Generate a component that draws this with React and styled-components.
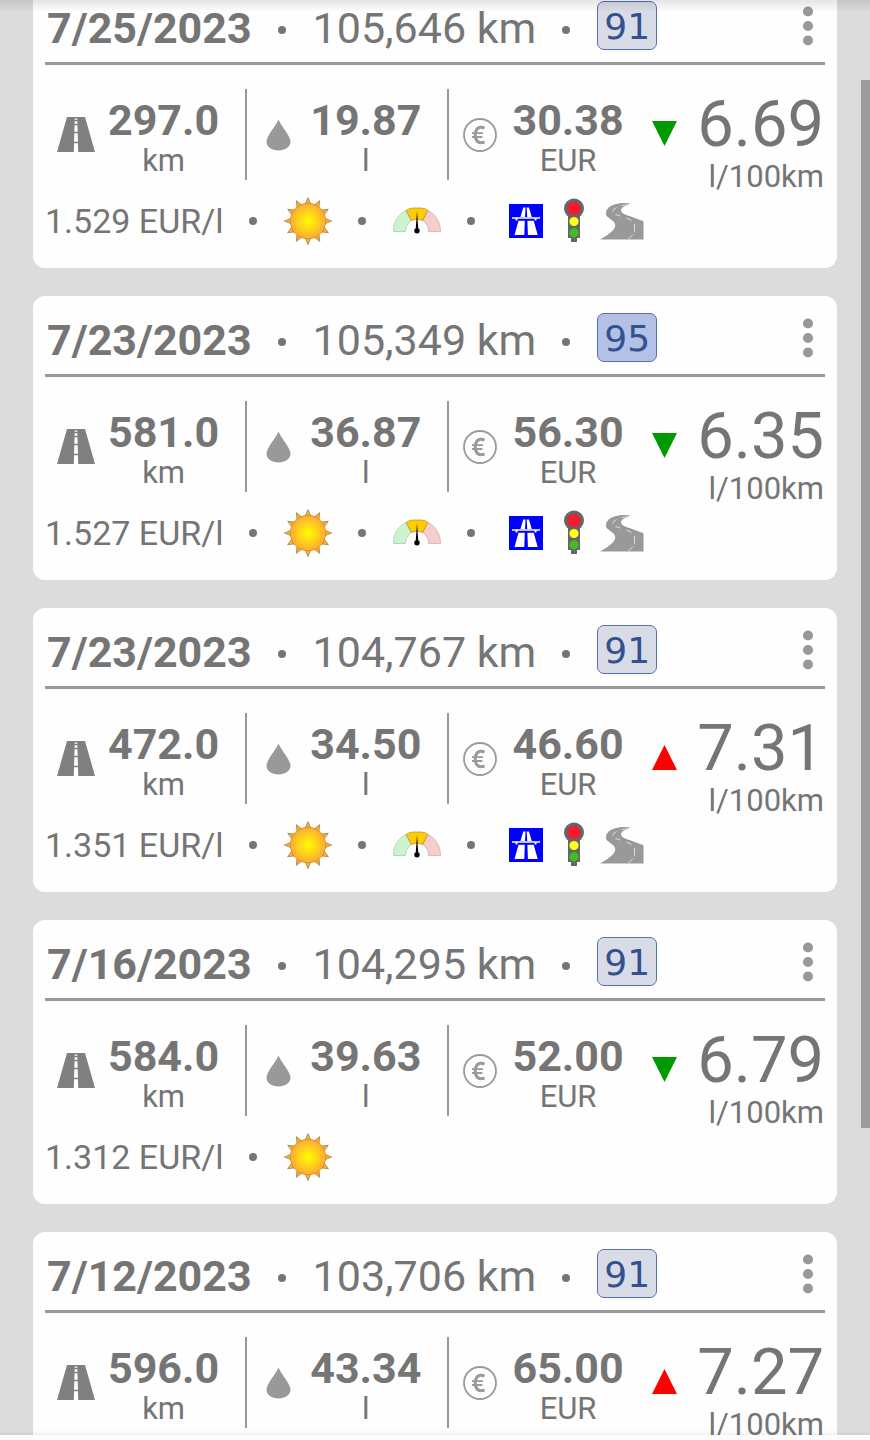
import styled, { createGlobalStyle } from 'styled-components'

const entries = [
  { id: 1, date: '7/25/2023', odometer: '105,646 km', octane: 91, distance: '297.0', volume: '19.87', cost: '30.38', trend: 'down', consumption: '6.69', price: '1.529 EUR/l', gauge: true, roads: true },
  { id: 2, date: '7/23/2023', odometer: '105,349 km', octane: 95, distance: '581.0', volume: '36.87', cost: '56.30', trend: 'down', consumption: '6.35', price: '1.527 EUR/l', gauge: true, roads: true },
  { id: 3, date: '7/23/2023', odometer: '104,767 km', octane: 91, distance: '472.0', volume: '34.50', cost: '46.60', trend: 'up', consumption: '7.31', price: '1.351 EUR/l', gauge: true, roads: true },
  { id: 4, date: '7/16/2023', odometer: '104,295 km', octane: 91, distance: '584.0', volume: '39.63', cost: '52.00', trend: 'down', consumption: '6.79', price: '1.312 EUR/l' },
  { id: 5, date: '7/12/2023', odometer: '103,706 km', octane: 91, distance: '596.0', volume: '43.34', cost: '65.00', trend: 'up', consumption: '7.27' },
]

const GlobalStyle = createGlobalStyle`
  *{
    box-sizing:border-box;
  }
  body{
    margin:0;
    background:#fdfdfd;
    color:#757575;
    font-family:Roboto, sans-serif;
  }
`

const Screen = styled.main`
  display:flex;
  flex-direction:column;
  height:100vh;
  padding-bottom:5px;
`

const Scroller = styled.div`
  position:relative;
  flex:1;
  min-height:0;
  overflow:hidden;
  background:#dcdcdc;
    &::before, &::after{
      content:'';
      position:absolute;
      left:0;
      right:0;
      z-index:1;
    }
    &::before{
      top:0;
      height:12px;
      background:linear-gradient(rgba(0, 0, 0, 0.1), rgba(0, 0, 0, 0));
    }
    &::after{
      bottom:0;
      height:5px;
      background:linear-gradient(rgba(0, 0, 0, 0), rgba(0, 0, 0, 0.05));
    }
`

const Thumb = styled.div`
  position:absolute;
  top:80px;
  right:0;
  width:9px;
  height:73%;
  background:#9d9d9d;
`

const List = styled.div`
  display:flex;
  flex-direction:column;
  gap:28px;
  margin-top:-16px;
  padding:0 33px;
`

const Card = styled.article`
  flex:none;
  min-height:284px;
  padding:0 12px 21px;
  border-radius:12px;
  background:#fefefe;
  white-space:nowrap;
`

const Header = styled.header`
  display:flex;
  align-items:flex-end;
  height:81px;
  padding:0 0 12px 2px;
  border-bottom:3px solid #999;
`

const Title = styled.h2`
  margin:0;
  font-size:43px;
  line-height:44px;
  font-weight:700;
`

const Odometer = styled.span`
  font-size:43px;
  line-height:44px;
`

const Dot = styled.span`
  display:flex;
  align-items:center;
  height:40px;
  padding:0 27px 0 26px;
    &::before{
      content:'';
      width:8px;
      height:8px;
      border-radius:50%;
      background:#757575;
    }
`

const Octane = styled.span`
  width:60px;
  height:49px;
  border:1px solid #5570ad;
  border-radius:7px;
  background:${({ $premium }) => ($premium ? '#b2c1e5' : '#d8dce7')};
  color:#34508f;
  font-family:'DejaVu Sans', sans-serif;
  font-size:36px;
  line-height:49px;
  text-align:center;
`

const MenuButton = styled.button`
  display:flex;
  align-items:center;
  justify-content:center;
  width:34px;
  height:49px;
  margin-left:auto;
  padding:0;
  border:none;
  background:none;
  cursor:pointer;
`

const Stats = styled.div`
  display:grid;
  grid-template-columns:7fr 7fr 7fr 6fr;
  align-items:start;
  padding-top:24px;
`

const Stat = styled.div`
  display:flex;
  align-items:center;
  height:91px;
  padding:0 24px 0 1px;
  border-right:2px solid ${({ $last }) => ($last ? 'transparent' : '#999')};
`

const StatIcon = styled.div`
  display:flex;
  flex:none;
  align-items:center;
  justify-content:center;
  width:60px;
`

const Figure = styled.div`
  flex:1;
  padding-top:6px;
  text-align:center;
`

const Value = styled.div`
  font-size:43px;
  line-height:46px;
  font-weight:700;
`

const Unit = styled.div`
  font-size:31px;
  line-height:36px;
`

const Consumption = styled.div`
  display:flex;
  justify-content:space-between;
  padding-right:1px;
  text-align:right;
`

const Trend = styled.div`
  display:flex;
  align-items:center;
  height:88px;
`

const Average = styled.div`
  font-size:65px;
  line-height:70px;
`

const Footer = styled.footer`
  display:flex;
  align-items:center;
  height:52px;
`

const Price = styled.span`
  font-size:34px;
  line-height:40px;
`

const Condition = styled.span`
  display:flex;
  align-items:center;
  justify-content:center;
  width:48px;
  height:48px;
`

const RoadIcon = () => (
  <svg width="38" height="35" viewBox="0 0 38 35">
    <path d="M10 0h18l10 35H0z" fill="#808080" />
    <path d="M17.700 1.500h2.600L21.200 35h-4.400z" fill="#fff" />
    <path d="M16 3.500h6M16 7.500h6M16 15.500h6M16 25.500h6" stroke="#808080" strokeWidth="1.400" />
  </svg>
)

const DropIcon = () => (
  <svg width="25" height="32" viewBox="0 0 25 32">
    <path d="M12.500 0.500C14.500 6 24.500 17 24.500 22.500c0 5.500-5.400 9-12 9S0.500 28 0.500 22.500C0.500 17 10.500 6 12.500 0.500z" fill="#999" />
  </svg>
)

const EuroIcon = () => (
  <svg width="34" height="34" viewBox="0 0 34 34" fill="none" stroke="#999">
    <circle cx="17" cy="17" r="16" strokeWidth="1.800" />
    <path d="M21.500 10.200c-5.200-2.600-9.300 0.600-9.300 6.800s4.100 9.400 9.300 6.800" strokeWidth="3" />
    <path d="M9 15.200h11M9 19h10.400" strokeWidth="1.800" />
  </svg>
)

const TrendIcon = ({ trend }) => (
  <svg width="25" height="25" viewBox="0 0 25 25">
    {trend === 'up' ? <path d="M12.500 0L25 25H0z" fill="#f00" /> : <path d="M0 0h25L12.500 25z" fill="#090" />}
  </svg>
)

const MenuIcon = () => (
  <svg width="10" height="40" viewBox="0 0 10 40" fill="#999">
    <circle cx="5" cy="5.500" r="5" />
    <circle cx="5" cy="20" r="5" />
    <circle cx="5" cy="34.500" r="5" />
  </svg>
)

const rays = Array.from({ length: 12 }, (_, i) => i * 30)

const SunIcon = () => (
  <svg width="48" height="48" viewBox="0 0 48 48">
    <defs>
      <radialGradient id="sun">
        <stop offset="0" stopColor="#ffff00" />
        <stop offset="1" stopColor="#ffa932" />
      </radialGradient>
    </defs>
    {rays.map(angle => (
      <path key={angle} d="M24 0.500L27 7.500H21z" fill="#ffb02e" stroke="#8a6a3c" strokeWidth="0.600" transform={`rotate(${angle} 24 24)`} />
    ))}
    <circle cx="24" cy="24" r="17.800" fill="url(#sun)" stroke="#b98237" strokeWidth="0.600" />
  </svg>
)

const GaugeIcon = () => (
  <svg width="48" height="48" viewBox="0 0 48 48" strokeWidth="0.700">
    <path d="M0.500 34.500C0.500 25 5 17.500 13 13.500L18.500 23.500C14.500 26 12.500 30 12.500 34.500z" fill="#ccf5cf" stroke="#a9bfa9" />
    <path d="M47.500 34.500C47.500 25 43 17.500 35 13.500L29.500 23.500C33.500 26 35.500 30 35.500 34.500z" fill="#f6cccc" stroke="#c9aaaa" />
    <path d="M13 13.500Q16 11 20 11H28Q32 11 35 13.500L29.500 23.500Q24 20.500 18.500 23.500z" fill="#ffcc00" stroke="#a98e2c" />
    <path d="M24 14L25.200 31H22.800z" />
    <circle cx="24" cy="33.800" r="2.700" />
  </svg>
)

const MotorwayIcon = () => (
  <svg width="34" height="34" viewBox="0 0 34 34">
    <path d="M0 0h34v34H0z" fill="#00f" />
    <g fill="#fff">
      <path d="M14.300 3.500h2.200L16 13h-4.600zM17.700 3.500h2.200L22.800 13h-4.600zM9.500 16.800h6.300L15.300 31H5.500zM18.400 16.800h6.300L28.700 31H18.900z" />
      <path d="M3 13.300h28v1.500h-3.500v1.700h-2v-1.700h-17v1.700h-2v-1.700H3z" />
    </g>
  </svg>
)

const TrafficLightIcon = () => (
  <svg width="20" height="46" viewBox="0 0 20 46">
    <path d="M4 15h12v25h-3v4H7v-4H4z" fill="#666" />
    <circle cx="10" cy="10.500" r="10" fill="#666" />
    <circle cx="10" cy="10.500" r="6.600" fill="#f51b2e" />
    <circle cx="10" cy="23.500" r="4.600" fill="#ffff14" />
    <circle cx="10" cy="34.800" r="4.600" fill="#3fbd23" />
  </svg>
)

const CountryRoadIcon = () => (
  <svg width="44" height="38" viewBox="0 0 44 38">
    <path d="M0 37.500C6 34 11 31 14 27C16 24 15.500 21.500 13 19C9 16 6 14.500 6 11.500C6 7 9.500 4 15 2.300C20 1 26 0.500 30 1.700C26 3.500 21.500 5 21 8C21 11.500 25 12.500 29.500 14L43.500 19.200V37.500z" fill="#999" />
    <path d="M26.500 2.500L21.500 3.800M16.500 5.500Q13.500 7 12.500 9.500M15.500 12.500L20.500 14M26.500 16L31.500 18.500M34.500 22V29.500M33 32.500L28.500 37" fill="none" stroke="#e4e4e4" strokeWidth="0.900" />
  </svg>
)

const Entry = ({ entry }) => {
  return <Card>
    <Header>
      <Title>{entry.date}</Title>
      <Dot />
      <Odometer>{entry.odometer}</Odometer>
      <Dot />
      <Octane $premium={entry.octane >= 95}>{entry.octane}</Octane>
      <MenuButton aria-label='Menu'><MenuIcon /></MenuButton>
    </Header>

    <Stats>
      <Stat>
        <StatIcon><RoadIcon /></StatIcon>
        <Figure><Value>{entry.distance}</Value><Unit>km</Unit></Figure>
      </Stat>
      <Stat>
        <StatIcon><DropIcon /></StatIcon>
        <Figure><Value>{entry.volume}</Value><Unit>l</Unit></Figure>
      </Stat>
      <Stat $last>
        <StatIcon><EuroIcon /></StatIcon>
        <Figure><Value>{entry.cost}</Value><Unit>EUR</Unit></Figure>
      </Stat>
      <Consumption>
        <Trend><TrendIcon trend={entry.trend} /></Trend>
        <div>
          <Average>{entry.consumption}</Average>
          <Unit>l/100km</Unit>
        </div>
      </Consumption>
    </Stats>

    {entry.price && <Footer>
      <Price>{entry.price}</Price>
      <Dot />
      <Condition><SunIcon /></Condition>
      {entry.gauge && <><Dot /><Condition><GaugeIcon /></Condition></>}
      {entry.roads && <>
        <Dot />
        <Condition><MotorwayIcon /></Condition>
        <Condition><TrafficLightIcon /></Condition>
        <Condition><CountryRoadIcon /></Condition>
      </>}
    </Footer>}
  </Card>
}

const App = () => {
  return <>
    <GlobalStyle />
    <Screen>
      <Scroller>
        <List>
          {entries.map(entry => <Entry key={entry.id} entry={entry} />)}
        </List>
        <Thumb />
      </Scroller>
    </Screen>
  </>
}

export default App
